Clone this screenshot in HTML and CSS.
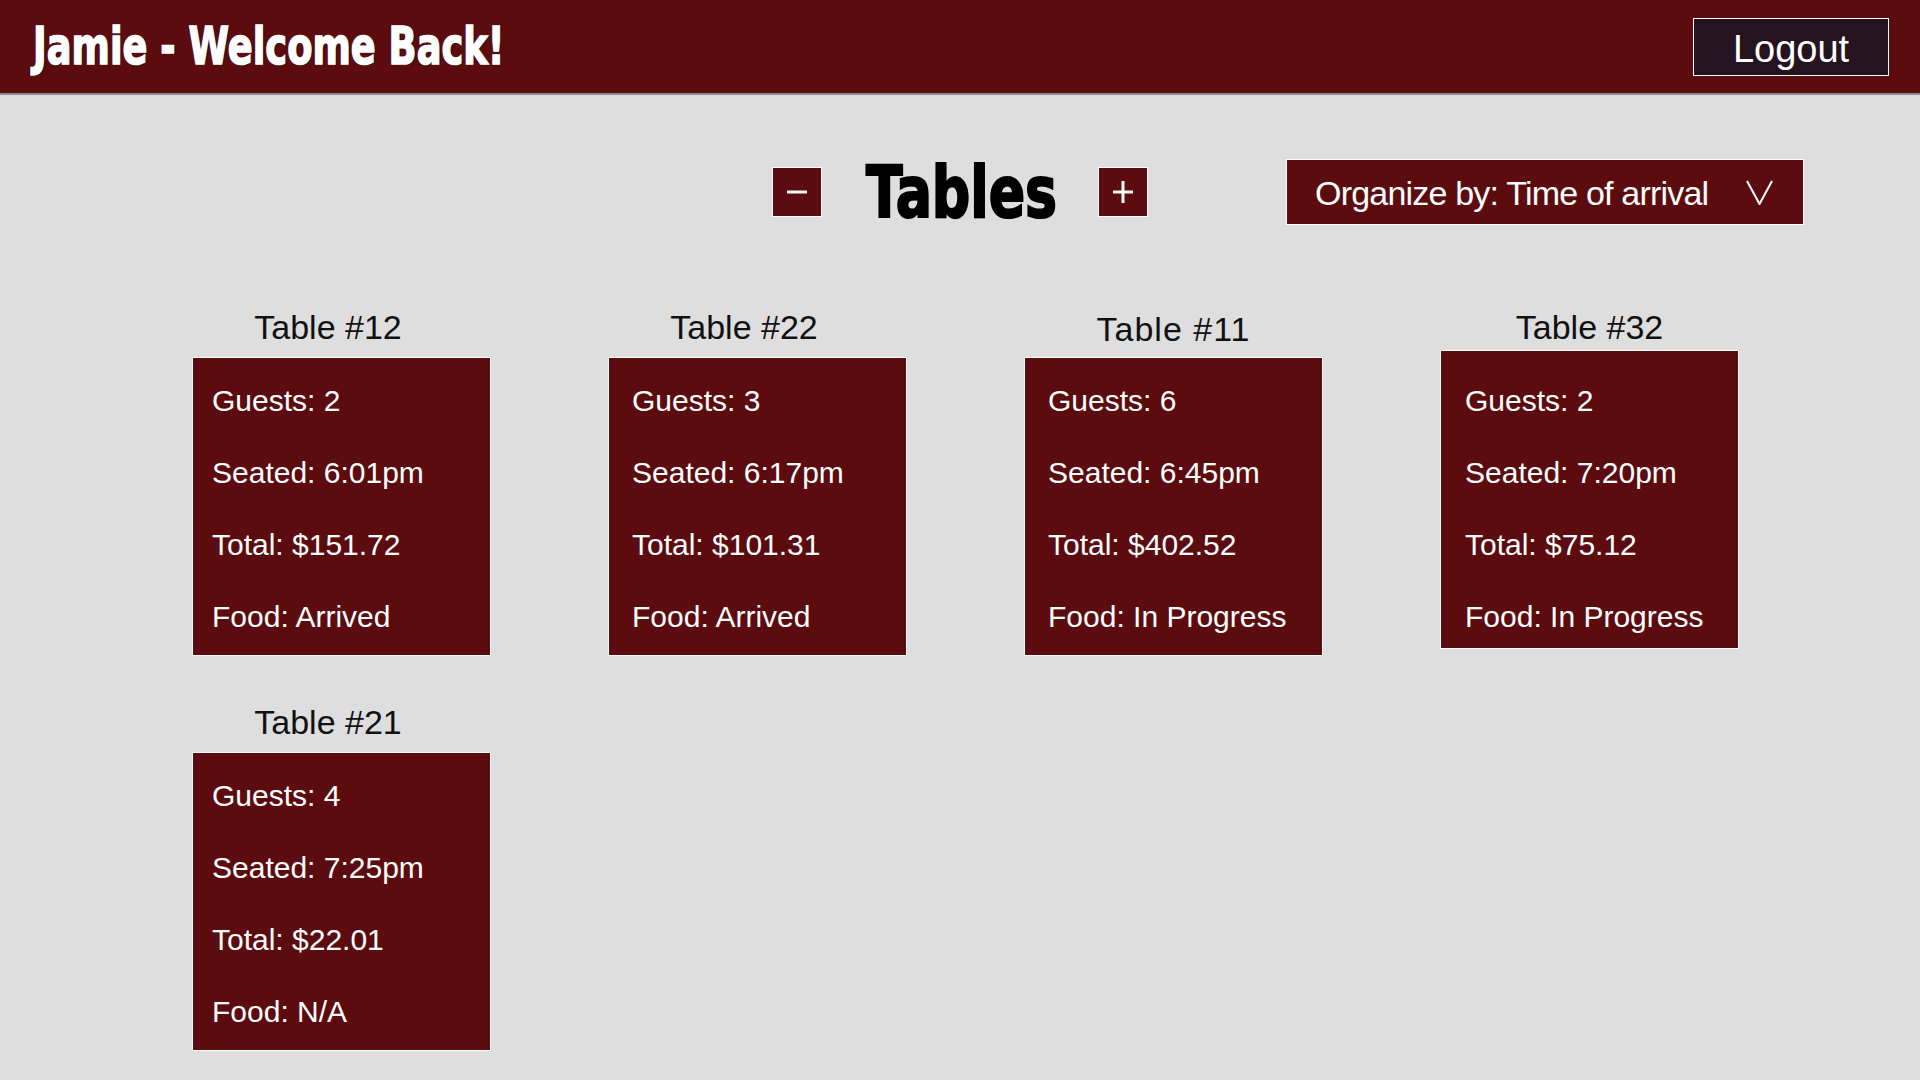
FILE: index.html
```html
<!DOCTYPE html>
<html lang="en">
<head>
<meta charset="utf-8">
<title>Tables</title>
<link rel="stylesheet" href="styles.css">
</head>
<body>
<header class="topbar">
  <h1 class="welcome"><span class="squeeze welcome-text">Jamie - Welcome Back!</span></h1>
  <button class="logout">Logout</button>
</header>
<main class="main">
  <div class="toolbar">
    <button class="square-btn minus" aria-label="Remove table">
      <svg width="20" height="22" viewBox="0 0 20 22"><line x1="0" y1="11" x2="20" y2="11" stroke="#fff" stroke-width="3"/></svg>
    </button>
    <h2 class="page-title"><span class="squeeze title-text">Tables</span></h2>
    <button class="square-btn plus" aria-label="Add table">
      <svg width="20" height="22" viewBox="0 0 20 22"><line x1="0" y1="11" x2="20" y2="11" stroke="#fff" stroke-width="3"/><line x1="10" y1="0" x2="10" y2="22" stroke="#fff" stroke-width="3"/></svg>
    </button>
    <div class="organize">
      <span class="organize-label">Organize by: Time of arrival</span>
      <svg class="chev" width="27" height="25" viewBox="0 0 27 25"><polyline points="1,1 13.5,24 26,1" fill="none" stroke="#fff" stroke-width="2"/></svg>
    </div>
  </div>
  <section class="grid">
    <div class="table-card">
      <div class="table-name table-name--left">Table #12</div>
      <div class="box">
        <div class="line">Guests: 2</div>
        <div class="line">Seated: 6:01pm</div>
        <div class="line">Total: $151.72</div>
        <div class="line">Food: Arrived</div>
      </div>
    </div>
    <div class="table-card">
      <div class="table-name table-name--left">Table #22</div>
      <div class="box box--wide-pad">
        <div class="line">Guests: 3</div>
        <div class="line">Seated: 6:17pm</div>
        <div class="line">Total: $101.31</div>
        <div class="line">Food: Arrived</div>
      </div>
    </div>
    <div class="table-card">
      <div class="table-name table-name--low">Table #11</div>
      <div class="box box--wide-pad">
        <div class="line">Guests: 6</div>
        <div class="line">Seated: 6:45pm</div>
        <div class="line">Total: $402.52</div>
        <div class="line">Food: In Progress</div>
      </div>
    </div>
    <div class="table-card">
      <div class="table-name">Table #32</div>
      <div class="box box--raised">
        <div class="line">Guests: 2</div>
        <div class="line">Seated: 7:20pm</div>
        <div class="line">Total: $75.12</div>
        <div class="line">Food: In Progress</div>
      </div>
    </div>
    <div class="table-card">
      <div class="table-name table-name--left">Table #21</div>
      <div class="box">
        <div class="line">Guests: 4</div>
        <div class="line">Seated: 7:25pm</div>
        <div class="line">Total: $22.01</div>
        <div class="line">Food: N/A</div>
      </div>
    </div>
  </section>
</main>
</body>
</html>
```
FILE: styles.css
```css
* { box-sizing: border-box; }

html, body {
  margin: 0;
  padding: 0;
  background: #dedede;
  font-family: "Liberation Sans", Arial, Helvetica, sans-serif;
}

.topbar {
  height: 95px;
  background: #5c0c0f;
  border-bottom: 2px solid #8c8c8c;
  display: flex;
  align-items: center;
  justify-content: space-between;
  padding: 0 31px 0 33px;
}

.squeeze {
  display: inline-block;
  white-space: nowrap;
  transform-origin: left center;
}

.welcome {
  margin: 0;
  width: 470px;
  color: #fff;
  font-family: Impact, "DejaVu Sans", "Open Sans", sans-serif;
  font-weight: 700;
  font-size: 51px;
  line-height: 1;
}

.welcome-text {
  transform: scaleX(0.722);
  -webkit-text-stroke: 1.6px #fff;
  text-shadow: 1px 1px 0 #111, 2px 1px 0 #222;
}

.logout {
  width: 196px;
  height: 58px;
  background: #261320;
  border: 1px solid #fff;
  color: #fff;
  font-family: "Liberation Sans", Arial, sans-serif;
  font-size: 38px;
  padding: 4px 0 0 0;
  line-height: 1;
}

.main {
  padding-top: 63px;
}

.toolbar {
  display: flex;
  align-items: center;
  padding-left: 772px;
  height: 67px;
}

.square-btn {
  flex: none;
  width: 50px;
  height: 50px;
  background: #5c0c0f;
  border: 1px solid #fff;
  padding: 0;
  display: flex;
  align-items: center;
  justify-content: center;
}

.page-title {
  flex: none;
  margin: 0 45px 0 44px;
  width: 187px;
  font-family: Impact, "DejaVu Sans", "Open Sans", sans-serif;
  font-weight: 700;
  font-size: 72px;
  line-height: 1;
  color: #000;
}

.title-text {
  transform: scaleX(0.745);
  -webkit-text-stroke: 2.2px #000;
  text-shadow: 1px 1px 0 #888;
}

.organize {
  flex: none;
  margin-left: 138px;
  width: 518px;
  height: 66px;
  background: #5c0c0f;
  border: 1px solid #fff;
  display: flex;
  align-items: center;
  padding-left: 28px;
  color: #fff;
}

.organize-label {
  font-size: 34px;
  letter-spacing: -0.8px;
  white-space: nowrap;
  margin-top: 3px;
}

.chev {
  margin-left: 38px;
  margin-top: 2px;
}

.grid {
  margin: 82px 0 0 192px;
  display: grid;
  grid-template-columns: repeat(4, 299px);
  column-gap: 117px;
  row-gap: 46px;
}

.table-name {
  height: 40px;
  line-height: 40px;
  margin-bottom: 10px;
  text-align: center;
  font-size: 34px;
  color: #111;
}

.table-name--left {
  padding-right: 27px;
}

.table-name--low {
  transform: translateY(2px);
  letter-spacing: 1px;
}

.box {
  height: 299px;
  background: #5c0c0f;
  border: 1px solid #fff;
  padding: 7px 0 0 19px;
  color: #fff;
}

.box--wide-pad {
  padding-left: 23px;
}

.box--raised {
  margin-top: -7px;
  padding-top: 14px;
  padding-left: 24px;
}

.line {
  font-size: 30px;
  line-height: 72px;
  white-space: nowrap;
}
```
